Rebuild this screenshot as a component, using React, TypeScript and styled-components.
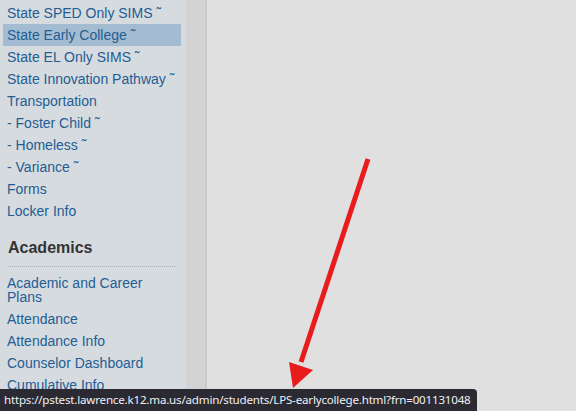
import React from "react";
import styled, { createGlobalStyle } from "styled-components";

const Global = createGlobalStyle`
  html, body { margin: 0; padding: 0; width: 576px; height: 411px; overflow: hidden; }
  body { font-family: "Liberation Sans", Arial, sans-serif; }
`;

const Page = styled.div`
  position: relative;
  display: flex;
  width: 576px;
  height: 411px;
  overflow: hidden;
  background: #e0e0e0;
`;

const Sidebar = styled.nav`
  width: 186px;
  flex: none;
  box-sizing: border-box;
  padding: 2px 5px 0 3px;
  background: #d6dbe0;
`;

const Strip = styled.div`
  width: 19px;
  flex: none;
  background: #d3d3d3;
  border-right: 2px solid #c6cacf;
`;

const Main = styled.main`
  flex: 1;
  background: #e0e0e0;
`;

const List = styled.ul`
  list-style: none;
  margin: 0;
  padding: 0;
`;

const Item = styled.li<{ $active?: boolean }>`
  padding: 4px 2px 4px 4px;
  font-size: 14px;
  line-height: 14px;
  color: #245d93;
  background: ${(p) => (p.$active ? "#a3bcd1" : "transparent")};
`;

const Heading = styled.h3`
  margin: 17px 0 5px 5px;
  padding: 0 0 9px 0;
  width: 167px;
  font-size: 16px;
  line-height: 18px;
  font-weight: bold;
  color: #333333;
  border-bottom: 1px dotted #a8abae;
`;

const StatusBar = styled.div`
  position: absolute;
  left: 0;
  bottom: 0;
  width: 477px;
  height: 22px;
  box-sizing: border-box;
  padding-left: 4px;
  background: #2b2a33;
  color: #f0f0f4;
  border-top-right-radius: 4px;
  font-family: "Noto Sans", "Open Sans", sans-serif;
  font-size: 11.6px;
  line-height: 22px;
  letter-spacing: -0.2px;
  white-space: nowrap;
`;

const Arrow = styled.svg`
  position: absolute;
  left: 0;
  top: 0;
  pointer-events: none;
`;

const top = [
  "State SPED Only SIMS \u02DC",
  "State Early College \u02DC",
  "State EL Only SIMS \u02DC",
  "State Innovation Pathway \u02DC",
  "Transportation",
  "- Foster Child \u02DC",
  "- Homeless \u02DC",
  "- Variance \u02DC",
  "Forms",
  "Locker Info",
];

const academics = [
  "Academic and Career Plans",
  "Attendance",
  "Attendance Info",
  "Counselor Dashboard",
  "Cumulative Info",
];

export default function App() {
  return (
    <>
      <Global />
      <Page>
        <Sidebar>
          <List>
            {top.map((t, i) => (
              <Item key={t} $active={i === 1}>
                {t}
              </Item>
            ))}
          </List>
          <Heading>Academics</Heading>
          <List>
            {academics.map((t) => (
              <Item key={t}>{t}</Item>
            ))}
          </List>
        </Sidebar>
        <Strip />
        <Main />
        <Arrow width="576" height="411" viewBox="0 0 576 411">
          <line x1="368" y1="159" x2="301" y2="362" stroke="#e81c1c" strokeWidth="5" />
          <polygon points="289,362 313,370 293,388" fill="#e81c1c" />
        </Arrow>
        <StatusBar>
          https://pstest.lawrence.k12.ma.us/admin/students/LPS-earlycollege.html?frn=001131048
        </StatusBar>
      </Page>
    </>
  );
}
